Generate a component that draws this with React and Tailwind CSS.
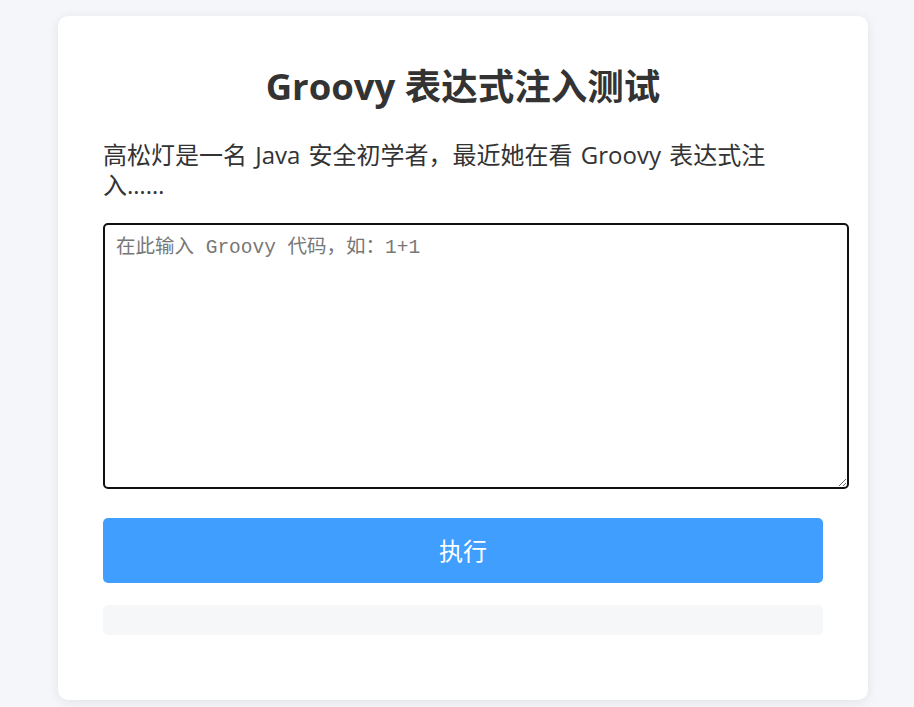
import { useState } from 'react';

const sans = '"Open Sans", "Noto Sans CJK SC", sans-serif';
const mono = '"Liberation Mono", "Noto Sans CJK SC", monospace';

export default function App() {
  const [code, setCode] = useState('');
  const [result, setResult] = useState('');

  return (
    <div className="min-h-screen bg-[#f5f6fa] pt-4" style={{ fontFamily: sans }}>
      <div className="ml-[58px] w-[810px] rounded-[10px] bg-white px-[45px] pt-[48px] pb-[65px] shadow-[0_2px_12px_rgba(0,0,0,0.08)]">
        <h1 className="text-center text-[36.5px] leading-[44px] font-bold text-[#333]">
          Groovy 表达式注入测试
        </h1>
        <p className="mt-[32px] max-w-[700px] text-[24px] leading-[30px] [word-spacing:2px] text-[#333]">
          高松灯是一名 Java 安全初学者，最近她在看 Groovy 表达式注入……
        </p>
        <textarea
          value={code}
          onChange={e => setCode(e.target.value)}
          placeholder="在此输入 Groovy 代码，如：1+1"
          className="mt-[23px] box-content block h-[240px] w-full rounded-[5px] border-2 border-[#111] p-[11px] text-[19.5px] leading-[24px] text-[#333] placeholder:text-[#777] outline-none"
          style={{ fontFamily: mono }}
        />
        <button
          onClick={() => setResult(code)}
          className="mt-[29px] block h-[65px] w-full rounded-[5px] bg-[#409eff] text-[24px] text-white"
        >
          执行
        </button>
        <div className="mt-[22px] h-[30px] rounded-[5px] bg-[#f6f7f9] px-3 text-sm leading-[30px] text-[#333]">
          {result}
        </div>
      </div>
    </div>
  );
}
